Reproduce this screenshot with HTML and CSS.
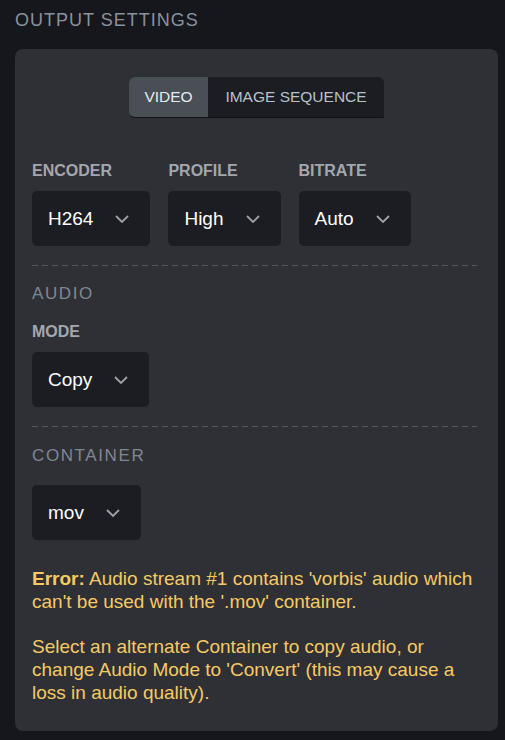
FILE: index.html
```html
<!DOCTYPE html>
<html>
<head>
<meta charset="utf-8">
<link rel="stylesheet" href="styles.css">
</head>
<body>
<h2 class="page-title">OUTPUT SETTINGS</h2>
<div class="card">
  <div class="tabs-row">
    <div class="tabs">
      <div class="tab active">VIDEO</div>
      <div class="tab">IMAGE SEQUENCE</div>
    </div>
  </div>

  <div class="fields video-fields">
    <div class="field">
      <div class="label">ENCODER</div>
      <div class="select"><span>H264</span><svg class="chev" width="14" height="8" viewBox="0 0 14 8"><path d="M1 1 L7 7 L13 1" fill="none" stroke="#9da1a8" stroke-width="1.8"/></svg></div>
    </div>
    <div class="field">
      <div class="label">PROFILE</div>
      <div class="select"><span>High</span><svg class="chev" width="14" height="8" viewBox="0 0 14 8"><path d="M1 1 L7 7 L13 1" fill="none" stroke="#9da1a8" stroke-width="1.8"/></svg></div>
    </div>
    <div class="field">
      <div class="label">BITRATE</div>
      <div class="select"><span>Auto</span><svg class="chev" width="14" height="8" viewBox="0 0 14 8"><path d="M1 1 L7 7 L13 1" fill="none" stroke="#9da1a8" stroke-width="1.8"/></svg></div>
    </div>
  </div>

  <div class="divider"></div>

  <div class="section-title">AUDIO</div>
  <div class="fields">
    <div class="field">
      <div class="label label-tight">MODE</div>
      <div class="select"><span>Copy</span><svg class="chev" width="14" height="8" viewBox="0 0 14 8"><path d="M1 1 L7 7 L13 1" fill="none" stroke="#9da1a8" stroke-width="1.8"/></svg></div>
    </div>
  </div>

  <div class="divider"></div>

  <div class="section-title section-title-gap">CONTAINER</div>
  <div class="fields">
    <div class="select"><span>mov</span><svg class="chev" width="14" height="8" viewBox="0 0 14 8"><path d="M1 1 L7 7 L13 1" fill="none" stroke="#9da1a8" stroke-width="1.8"/></svg></div>
  </div>

  <div class="error">
    <p><strong>Error:</strong> Audio stream #1 contains 'vorbis' audio which can't be used with the '.mov' container.</p>
    <p>Select an alternate Container to copy audio, or change Audio Mode to 'Convert' (this may cause a loss in audio quality).</p>
  </div>
</div>
</body>
</html>
```

FILE: styles.css
```css
* { box-sizing: border-box; }

html, body {
  margin: 0;
  background: #16171c;
}

body {
  font-family: "Liberation Sans", Arial, sans-serif;
  padding-top: 9px;
  width: 505px;
  height: 740px;
  overflow: hidden;
}

.page-title {
  margin: 0 0 18px 15px;
  font-size: 18px;
  line-height: 22px;
  font-weight: normal;
  letter-spacing: 1px;
  color: #8a929c;
}

.card {
  margin: 0 7px 0 15px;
  background: #2f3035;
  border-radius: 8px;
  padding: 28px 17px 27px 17px;
}

.tabs-row {
  display: flex;
  justify-content: center;
}

.tabs {
  display: flex;
  border-radius: 6px 6px 2px 6px;
  overflow: hidden;
  background: #1b1d23;
  border-bottom: 1px solid #111216;
}

.tab {
  height: 40px;
  display: flex;
  align-items: center;
  justify-content: center;
  font-size: 15.5px;
  color: #b9c1cc;
  width: 176px;
}

.tab.active {
  background: #4a4e55;
  color: #e6ebf2;
  width: 79px;
}

.fields {
  display: flex;
  gap: 18px;
}

.video-fields {
  margin-top: 44px;
}

.field {
  display: flex;
  flex-direction: column;
}

.label {
  font-size: 16px;
  line-height: 18px;
  font-weight: bold;
  color: #a3a7ae;
  margin-bottom: 11px;
}

.label-tight {
  margin-top: 19px;
}

.select {
  height: 55px;
  background: #1b1d23;
  border-radius: 5px;
  display: flex;
  align-items: center;
  gap: 22px;
  padding: 0 21px 0 16px;
  font-size: 19px;
  color: #ffffff;
}

.chev {
  display: block;
  margin-top: 1px;
}

.divider {
  height: 1px;
  margin: 19px 4px 0 0;
  background: repeating-linear-gradient(to right, #54575d 0 6px, transparent 6px 10px);
}

.section-title {
  margin-top: 18px;
  font-size: 17px;
  line-height: 20px;
  letter-spacing: 1.6px;
  color: #7e8894;
}

.section-title-gap {
  margin-top: 19px;
  margin-bottom: 19px;
}

.error {
  margin-top: 27px;
  color: #f6ca63;
  font-size: 19px;
  line-height: 23px;
}

.error p {
  margin: 0 0 22px 0;
}

.error p:last-child {
  margin-bottom: 0;
}

.error strong {
  font-weight: bold;
}
```
